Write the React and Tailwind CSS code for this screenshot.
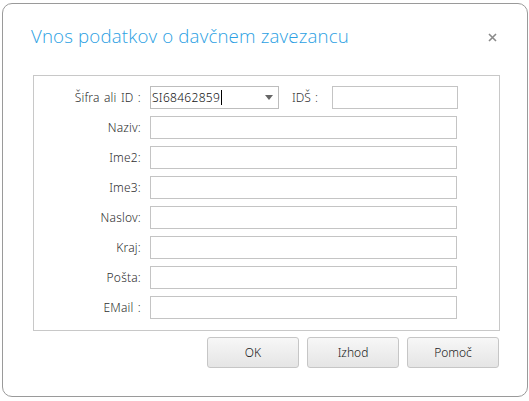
import React from "react";

const labelFont = { fontFamily: '"Noto Sans", "DejaVu Sans", sans-serif' };

const rows = ["Naziv:", "Ime2:", "Ime3:", "Naslov:", "Kraj:", "Pošta:", "EMail :"];

const Field = ({ className = "" }) => (
  <div className={`h-[23px] border border-[#c4c4c4] bg-white ${className}`} />
);

const Label = ({ children }) => (
  <div className="w-[108px] shrink-0 text-right text-[12px] font-light text-[#2e2e2e] pr-[1px] tracking-[0.2px] [word-spacing:1px]">
    {children}
  </div>
);

export default function App() {
  return (
    <div className="w-[529px] h-[401px] bg-white" style={labelFont}>
      <div className="relative ml-[2px] mt-[3px] w-[526px] h-[394px] rounded-[10px] border border-[#9a9a9a] bg-white">
        {/* Header */}
        <div className="flex items-start justify-between pl-[28px] pr-[30px] pt-[23px] h-[71px]">
          <h1
            className="text-[18.7px] font-light text-[#2c9fe3] leading-none tracking-[0.15px]"
            style={{ fontFamily: '"Open Sans", "Noto Sans", sans-serif' }}
          >
            Vnos podatkov o davčnem zavezancu
          </h1>
          <button className="mt-[6px] text-[#8a8a8a]">
            <svg width="9" height="9" viewBox="0 0 9 9">
              <path d="M1 1L8 8M8 1L1 8" stroke="currentColor" strokeWidth="1.6" />
            </svg>
          </button>
        </div>

        {/* Form panel */}
        <div className="ml-[30px] w-[467px] border border-[#c8c8c8] pt-[10px] pb-[11px] flex flex-col gap-[7px]">
          <div className="flex items-center gap-[8px]">
            <Label>Šifra ali ID :</Label>
            <div className="relative flex items-center w-[129px] h-[23px] border border-[#bdbdbd] bg-white">
              <span className="pl-[1px] text-[12px] font-light text-[#111] tracking-[0.3px]">SI68462859</span>
              <span className="ml-[1px] w-[1px] h-[15px] bg-black" />
              <svg className="absolute right-[5px] top-[8px]" width="8" height="5" viewBox="0 0 8 5">
                <path d="M0 0H8L4 5Z" fill="#666" />
              </svg>
            </div>
            <span className="ml-[5px] text-[12px] font-light text-[#2e2e2e] [word-spacing:1px]">IDŠ :</span>
            <Field className="ml-[6px] w-[126px]" />
          </div>
          {rows.map((r) => (
            <div key={r} className="flex items-center gap-[8px]">
              <Label>{r}</Label>
              <Field className="w-[307px]" />
            </div>
          ))}
        </div>

        {/* Buttons */}
        <div className="flex justify-end gap-[8px] pr-[28px] mt-[6px]">
          {["OK", "Izhod", "Pomoč"].map((b) => (
            <button
              key={b}
              className="w-[92px] h-[31px] rounded-[3px] border border-[#c6c6c6] bg-gradient-to-b from-[#f7f7f7] to-[#e5e5e5] text-[12px] font-light text-[#222]"
            >
              {b}
            </button>
          ))}
        </div>
      </div>
    </div>
  );
}
